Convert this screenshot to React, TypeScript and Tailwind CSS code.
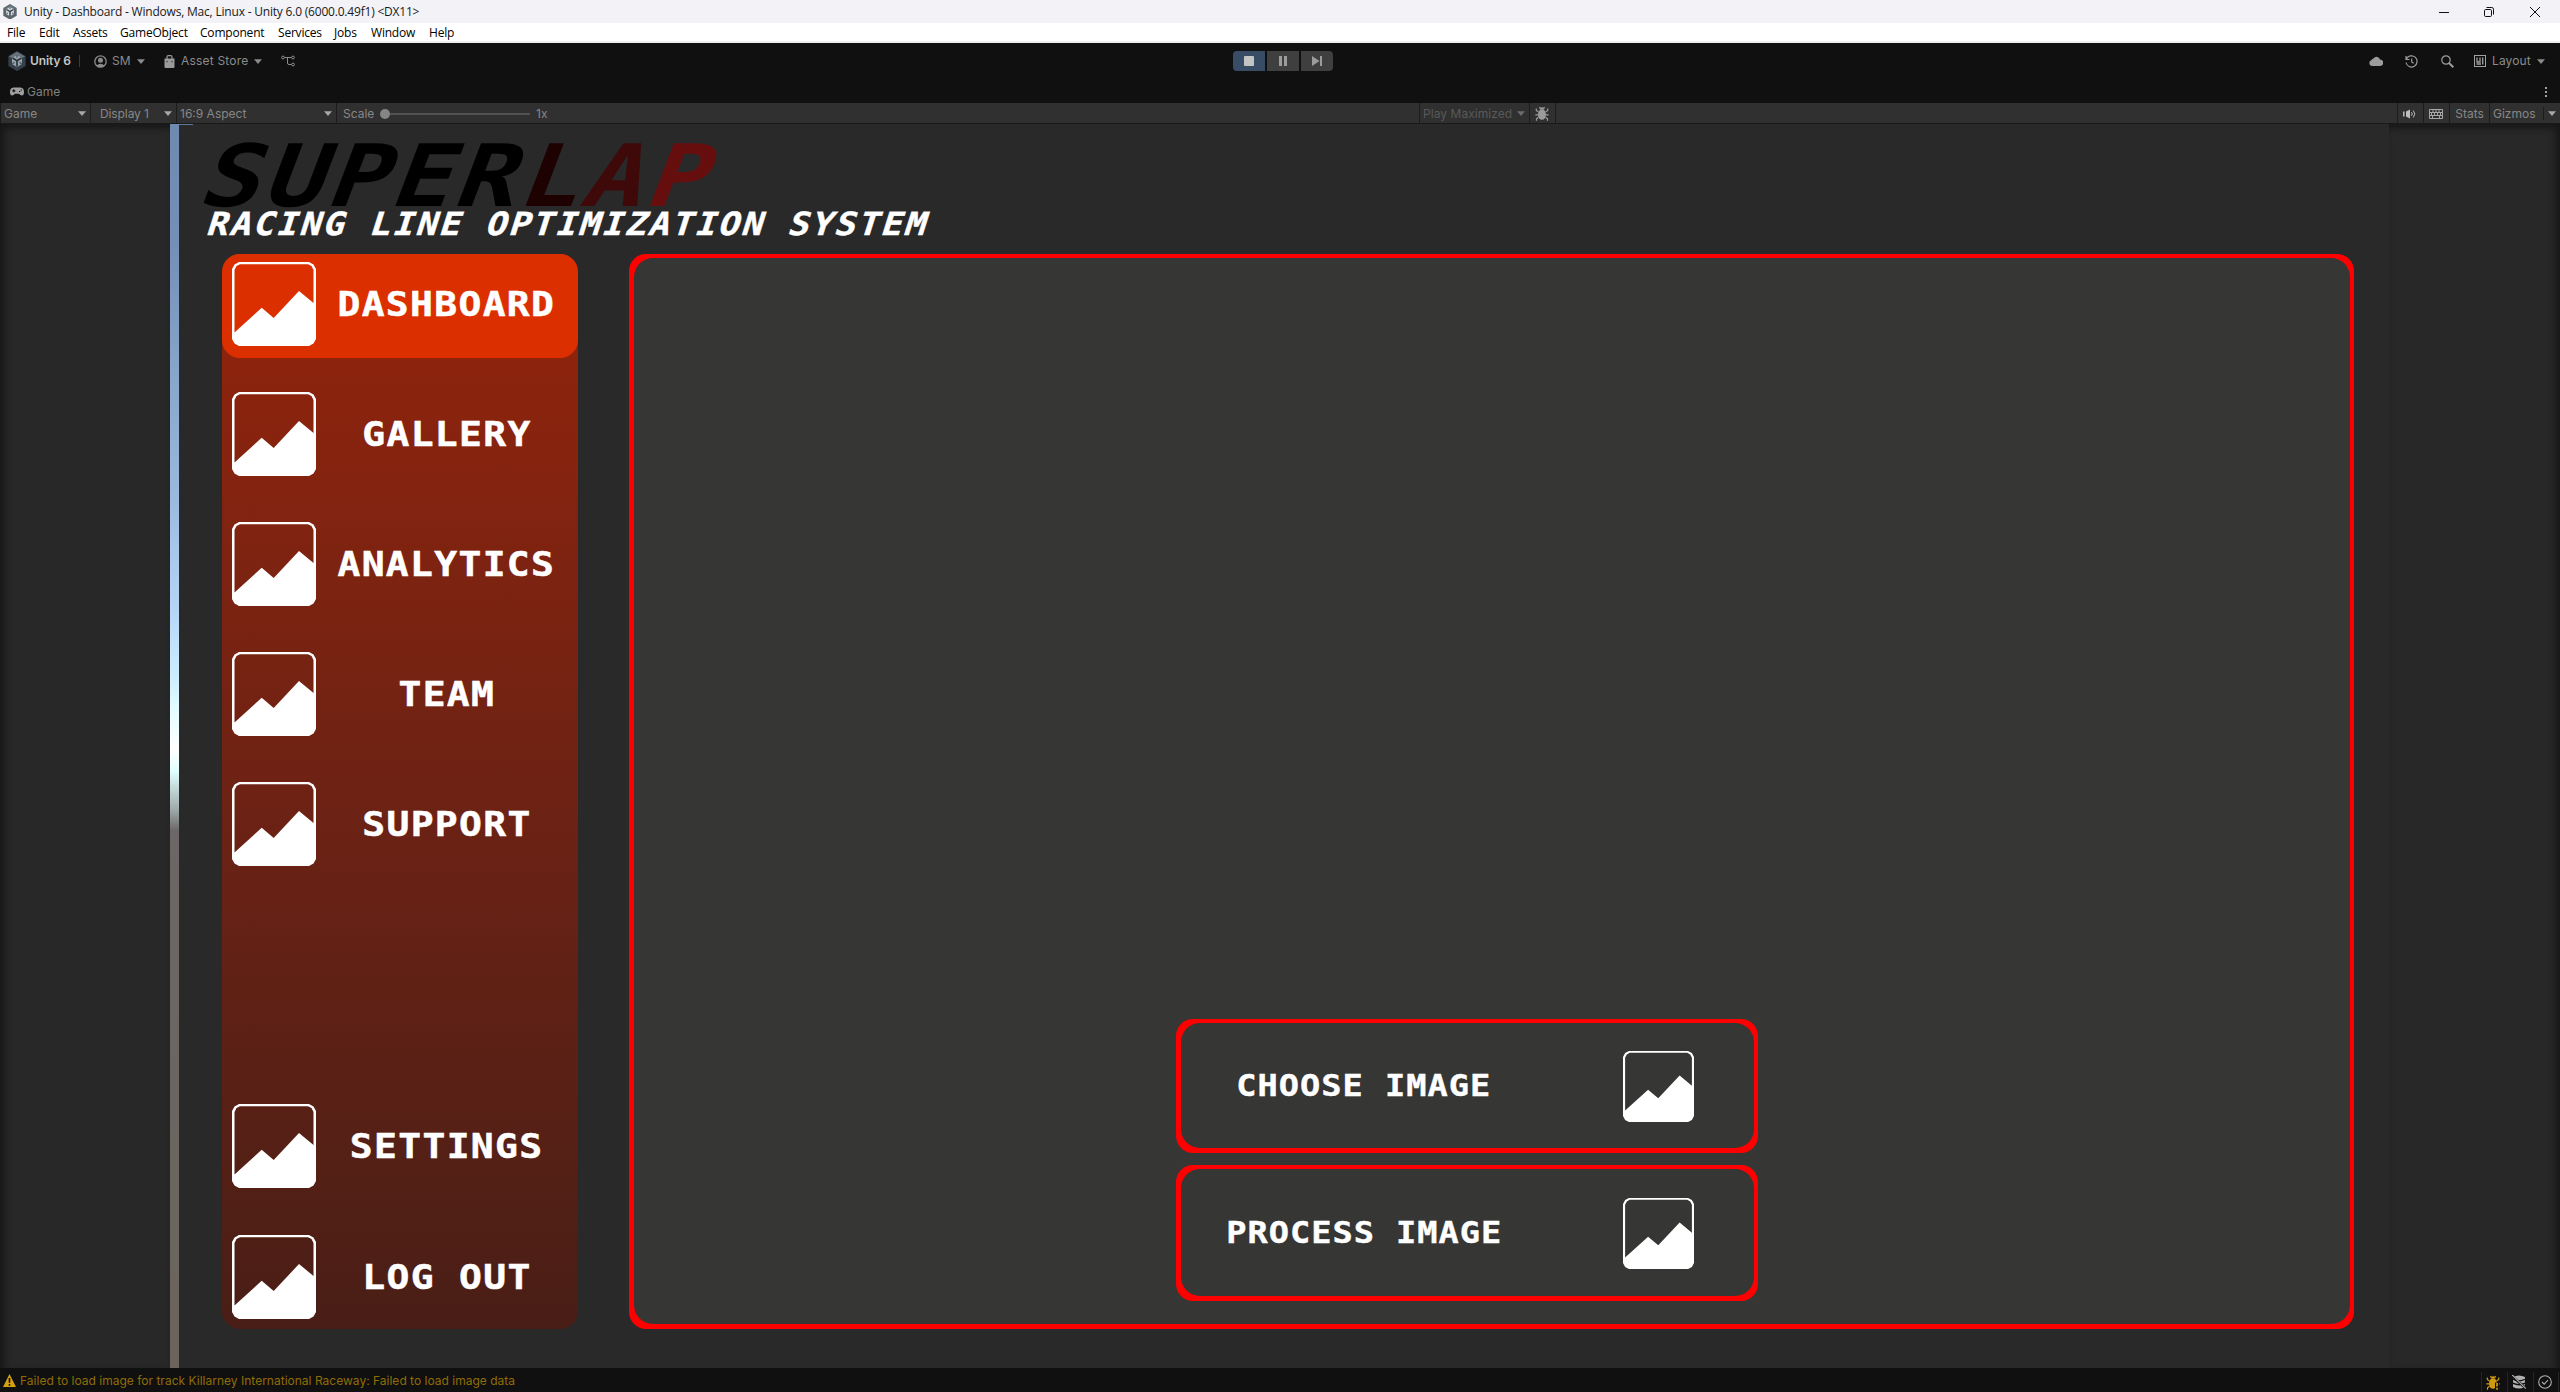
import React from "react";

const ui = "font-['Inter',sans-serif] whitespace-nowrap";
const mono = "font-['DejaVu_Sans_Mono',monospace] font-bold whitespace-pre";

function Caret({ className = "" }: { className?: string }) {
  return (
    <svg className={"shrink-0 " + className} width="8" height="5" viewBox="0 0 8 5">
      <path d="M0 .3h8L4 5z" fill="currentColor" />
    </svg>
  );
}

function UnityLogo({ size, dark }: { size: number; dark?: boolean }) {
  return (
    <svg className="shrink-0" width={size} height={size * 1.12} viewBox="0 0 18 20">
      <path d="M9 0l8.6 5v10L9 20 .4 15V5z" fill={dark ? "#59646d" : "#36404a"} />
      <path d="M9 .6l8 4.7-3 1.5L9 4 4 6.800 1 5.300z" fill="#66727c" />
      <path d="M9 3.800l5 2.900v6.100L9 15.800l-5-3V6.700z" fill={dark ? "#d5dade" : "#9aa4ac"} />
      <path d="M4.500 7L9 9.700 13.500 7M9 9.700v5.600" stroke="#2d353c" strokeWidth="1.700" fill="none" />
      <path d="M9 4v2.600M4.300 12.700l2.200-1.400M13.700 12.700l-2.200-1.400" stroke="#46515a" strokeWidth="1.200" />
    </svg>
  );
}

function Picture({ className }: { className: string }) {
  return (
    <svg className={"shrink-0 " + className} viewBox="0 0 84 84" preserveAspectRatio="none">
      <path
        fillRule="evenodd"
        fill="#fff"
        d="M7 0H77L81.500 2.500 84 7V77L81.500 81.500 77 84H7L2.500 81.500 0 77V7L2.500 2.500ZM8 2.200 4.500 4 2.500 8V70.500L29.700 45.700 41.700 56 67 29 81.500 41V8L79.500 4 76 2.200Z"
      />
    </svg>
  );
}

function Bug({ color, alert }: { color: string; alert?: boolean }) {
  return (
    <svg width="14" height="15" viewBox="0 0 14 15" fill="none" stroke={color} strokeWidth="1.200">
      <ellipse cx="7" cy="8.500" rx="4" ry="5.300" fill={color} stroke="none" />
      <path d="M4.800 3.500a2.200 2.200 0 014.400 0z" fill={color} stroke="none" />
      <path d="M4.500 1l1 2M9.500 1l-1 2M3.500 6L1.300 4.500V2.500M10.500 6l2.200-1.500V2.500M3 8.800H.3M11 8.800h2.700M3.500 11.300L1.500 12.800V14.800M10.500 11.300l2 1.500V14.800" />
      {alert && <path d="M11 7.500v8" stroke="#101010" strokeWidth="4" />}
      {alert && <path d="M11 8v3.500M11 12.800v1.900" stroke={color} strokeWidth="1.700" />}
    </svg>
  );
}

function TitleBar() {
  return (
    <div className="flex h-[23px] items-center bg-[#f2f2f7]">
      <div className="flex w-6 pl-[3px]">
        <UnityLogo size={14} dark />
      </div>
      <span className="grow font-['Open_Sans',sans-serif] text-[12px] leading-[23px] tracking-[-0.200px] whitespace-nowrap text-[#1a1a1a]">
        Unity - Dashboard - Windows, Mac, Linux - Unity 6.0 (6000.0.49f1) &lt;DX11&gt;
      </span>
      <svg className="mr-[35px]" width="10" height="10" viewBox="0 0 10 10">
        <path d="M0 5.500h10" stroke="#111" />
      </svg>
      <svg className="mr-9" width="10" height="10" viewBox="0 0 10 10" fill="none" stroke="#111">
        <rect x=".5" y="2.500" width="7" height="7" rx="1.200" />
        <path d="M2.500.5H7.800Q9.500.5 9.500 2.200V7.500" />
      </svg>
      <svg className="mr-5" width="10" height="10" viewBox="0 0 10 10">
        <path d="M0 0l10 10M10 0L0 10" stroke="#111" />
      </svg>
    </div>
  );
}

function MenuBar() {
  const menus: [string, string][] = [
    ["File", "w-8"],
    ["Edit", "w-[34px]"],
    ["Assets", "w-[47px]"],
    ["GameObject", "w-20"],
    ["Component", "w-[78px]"],
    ["Services", "w-14"],
    ["Jobs", "w-[37px]"],
    ["Window", "w-[58px]"],
    ["Help", "w-10"],
  ];
  return (
    <div className="flex h-5 items-center border-b-2 border-[#eef1ee] bg-white pt-[2px] pl-[7px] font-['Open_Sans',sans-serif] text-[12px] leading-[18px] tracking-[-0.200px] text-black">
      {menus.map(([m, w]) => (
        <span key={m} className={"whitespace-nowrap " + w}>
          {m}
        </span>
      ))}
    </div>
  );
}

function MainToolbar() {
  return (
    <div className={"flex h-[37px] items-center bg-[#101010] pb-px text-[12px] text-[#8b8b8b] " + ui}>
      <div className="flex w-[1233px] items-center pl-2">
        <UnityLogo size={18} />
        <span className="ml-1 w-[49px] tracking-[-0.100px] font-semibold text-[#c4c4c4]">Unity 6</span>
        <span className="h-3 w-px bg-[#3a3a3a]" />
        <svg className="ml-[14px]" width="13" height="13" viewBox="0 0 13 13">
          <circle cx="6.500" cy="6.500" r="5.700" fill="none" stroke="currentColor" strokeWidth="1.300" />
          <circle cx="6.500" cy="5.200" r="2.500" fill="currentColor" />
          <path d="M2.500 10.500Q6.500 6.800 10.500 10.500 6.500 14 2.500 10.500" fill="currentColor" />
        </svg>
        <span className="ml-[5px] w-[25px]">SM</span>
        <Caret />
        <svg className="ml-[19px]" width="11" height="13" viewBox="0 0 11 13">
          <path d="M.5 3.500h10V12q0 1-1 1h-8q-1 0-1-1z" fill="#9a9a9a" />
          <path d="M3 4.500V2Q3 .6 4.200.6h2.600Q8 .6 8 2v2.500" fill="none" stroke="#9a9a9a" strokeWidth="1.200" />
          <path d="M3 6v1.200M8 6v1.200" stroke="#222" />
        </svg>
        <span className="ml-[6px] w-[73px] tracking-[0.200px]">Asset Store</span>
        <Caret />
        <svg className="ml-[19px]" width="14" height="12" viewBox="0 0 14 12" fill="none" stroke="currentColor">
          <circle cx="2" cy="2.500" r="1.400" />
          <circle cx="12" cy="2.500" r="1.400" />
          <circle cx="12" cy="9.500" r="1.400" />
          <path d="M3.500 2.500h7M6.500 2.500v5.500q0 1.500 1.500 1.500h2.500" />
        </svg>
      </div>
      <div className="flex w-[1136px] gap-[2px]">
        <span className="flex h-5 w-8 items-center justify-center rounded-l bg-[#384c66]">
          <span className="size-[10px] rounded-[1px] bg-[#c4c4c4]" />
        </span>
        <span className="flex h-5 w-8 items-center justify-center gap-[2px] bg-[#3f3f3f]">
          <span className="h-[10px] w-[3px] bg-[#9c9c9c]" />
          <span className="h-[10px] w-[3px] bg-[#9c9c9c]" />
        </span>
        <span className="flex h-5 w-8 items-center justify-center rounded-r bg-[#3f3f3f]">
          <svg width="10" height="10" viewBox="0 0 10 10" fill="#9c9c9c">
            <path d="M0 0l7.500 5L0 10zM8 0h2v10H8z" />
          </svg>
        </span>
      </div>
      <svg width="14" height="10" viewBox="0 0 14 10" fill="#9c9c9c">
        <path d="M3 10a3 3 0 01-.4-5.900A2 2 0 014.500 2.500 3.600 3.600 0 0111 3.500 3.200 3.200 0 0111 10z" />
      </svg>
      <svg className="ml-[22px]" width="13" height="13" viewBox="0 0 13 13" fill="none" stroke="#9c9c9c" strokeWidth="1.200">
        <path d="M1.300 4.300A5.600 5.600 0 111 7.500M1 1v3.500h3.500M6.700 3.500V7l2 1.200" />
      </svg>
      <svg className="ml-[23px]" width="13" height="13" viewBox="0 0 13 13" fill="none" stroke="#9c9c9c">
        <circle cx="5" cy="5" r="4.200" strokeWidth="1.200" />
        <path d="M8 8l4.300 4.300" strokeWidth="2" />
      </svg>
      <svg className="ml-5" width="12" height="12" viewBox="0 0 12 12" fill="none" stroke="#a0a0a0">
        <rect x=".5" y=".5" width="11" height="11" />
        <path d="M3 2.500v4.500H6V2.500M8.700 2.500v7M2.500 9h4.500" strokeWidth="1.300" />
      </svg>
      <span className="ml-[6px] w-[45px] tracking-[0.100px]">Layout</span>
      <Caret />
    </div>
  );
}

function TabBar() {
  return (
    <div className={"flex h-[23px] items-center bg-[#101010] pl-[10px] text-[12px] text-[#8b8b8b] " + ui}>
      <svg width="14" height="9" viewBox="0 0 14 9">
        <path d="M3.500 .5h7Q14 .8 14 5 14 8.500 11.800 8.500 10.500 8.500 9 6.800H5Q3.500 8.500 2.200 8.500 0 8.500 0 5 0 .8 3.500 .5" fill="#a0a0a0" />
        <path d="M2.300 3.800h3M3.800 2.300v3M9 4.500h1.300M10.700 3h1.300" stroke="#101010" strokeWidth="1.200" />
      </svg>
      <span className="ml-[3px] grow text-[#828282]">Game</span>
      <span className="mr-[13px] flex flex-col gap-[2px]">
        <i className="size-[2px] bg-[#a0a0a0]" />
        <i className="size-[2px] bg-[#a0a0a0]" />
        <i className="size-[2px] bg-[#a0a0a0]" />
      </span>
    </div>
  );
}

function GameToolbar() {
  const cell = "flex h-full items-center border-r border-[#1c1c1c] pt-px ";
  return (
    <div className={"flex h-[21px] items-center border-b border-[#191919] border-l bg-[#303030] text-[12px] text-[#878787] " + ui}>
      <div className={cell + "w-[90px] justify-between pr-1 pl-[3px]"}>
        Game <Caret className="text-[#a8a8a8]" />
      </div>
      <div className={cell + "w-[86px] justify-between pr-1 pl-[9px] tracking-[-0.100px]"}>
        Display 1 <Caret className="text-[#a8a8a8]" />
      </div>
      <div className={cell + "w-[160px] justify-between pr-1 pl-[3px]"}>
        16:9 Aspect <Caret className="text-[#a8a8a8]" />
      </div>
      <div className={cell + "w-[1083px] pl-[6px]"}>
        <span className="w-[37px]">Scale</span>
        <span className="size-[10px] rounded-full bg-[#858585]" />
        <span className="mr-[6px] h-[2px] w-[140px] bg-[#525252]" />
        <span>1x</span>
      </div>
      <div className={cell + "w-[110px] justify-between pr-1 pl-[3px] tracking-[0.050px] text-[#595959]"}>
        Play Maximized <Caret className="text-[#6b6b6b]" />
      </div>
      <div className={cell + "w-[26px] justify-center pr-[2px]"}>
        <Bug color="#9c9c9c" />
      </div>
      <div className={cell + "grow"} />
      <div className={cell + "w-[26px] justify-center pr-[2px]"}>
        <svg width="13" height="10" viewBox="0 0 13 10" fill="none" stroke="#bbb">
          <path d="M3 2.500L7 .5v9L3 7.500z" fill="#bbb" stroke="none" />
          <path d="M.8 2.500v5" strokeWidth="1.500" />
          <path d="M8.500 3.200q1.500 1.800 0 3.600M10.300 1.500q3 3.500 0 7" />
        </svg>
      </div>
      <div className={cell + "w-[26px] justify-center pr-[2px]"}>
        <svg width="14" height="10" viewBox="0 0 14 10" fill="none" stroke="#a8a8a8">
          <path d="M.5.5h13v9H.5zM.5 3.500h13M.5 6.500h13M4 .5v3M7 .5v3M10 .5v3M2.500 3.500v3M5.500 3.500v3M8.500 3.500v3M11.500 3.500v3M3.500 6.500v3M10.500 6.500v3" />
        </svg>
      </div>
      <div className={cell + "w-10 justify-center"}>Stats</div>
      <div className="flex h-full w-[53px] items-center pt-px pl-[3px]">Gizmos</div>
      <div className="flex h-[13px] w-[17px] items-center border-l border-[#1c1c1c] pl-[4px]">
        <Caret className="text-[#a8a8a8]" />
      </div>
    </div>
  );
}

function NavItem({ label, active, className = "" }: { label: string; active?: boolean; className?: string }) {
  return (
    <div className={"flex h-[104px] shrink-0 pt-2 pl-[10px] " + (active ? "rounded-[18px] bg-[#db2f00] " : "") + className}>
      <Picture className="size-[84px]" />
      <span className="flex h-[84px] w-[261px] items-center justify-center pt-[2px]">
        <span className={"scale-x-[1.130] text-[33.600px] leading-none tracking-[1.200px] text-white [-webkit-text-stroke:0.500px_white] " + mono}>
          {label}
        </span>
      </span>
    </div>
  );
}

function Sidebar() {
  return (
    <div className="flex h-[1075px] w-[356px] flex-col rounded-[18px] bg-linear-to-b from-[#94230a] to-[#491e16]">
      <div className="flex flex-col gap-[26px]">
        <NavItem label="DASHBOARD" active />
        <NavItem label="GALLERY" />
        <NavItem label="ANALYTICS" />
        <NavItem label="TEAM" />
        <NavItem label="SUPPORT" />
      </div>
      <div className="mt-[218px] flex flex-col gap-[27px]">
        <NavItem label="SETTINGS" />
        <NavItem label="LOG OUT" />
      </div>
    </div>
  );
}

function RedFrame({ className, inner, children }: { className: string; inner: string; children: React.ReactNode }) {
  return (
    <div className={"flex rounded-[17px] bg-[#ff0000] pt-1 pr-1 pb-[5px] pl-[5px] " + className}>
      <div className={"flex grow rounded-[19px] bg-[#363634] " + inner}>{children}</div>
    </div>
  );
}

function ActionButton({ label, className }: { label: string; className: string }) {
  return (
    <RedFrame className={"w-[582px] " + className} inner="items-center pl-[43px]">
      <span className="flex w-[280px] justify-center">
        <span className={"scale-x-[1.120] text-[30px] leading-none tracking-[0.900px] text-white [-webkit-text-stroke:0.400px_white] " + mono}>
          {label}
        </span>
      </span>
      <Picture className="mt-[2px] ml-[119px] size-[71px]" />
    </RedFrame>
  );
}

function Brand() {
  return (
    <div className="flex h-[130px] flex-col items-start pt-[21px] pl-[16px]">
      <div className={"origin-bottom-left -skew-x-[18deg] scale-x-[1.170] text-[86px] leading-[63px] tracking-[2.700px] text-black " + mono}>
        SUPER<span className="text-[#1e0101]">L</span>
        <span className="text-[#3f0909]">A</span>
        <span className="text-[#660e0e]">P</span>
      </div>
      <div className={"mt-1 ml-[10px] origin-bottom-left -skew-x-[16deg] scale-x-[1.100] text-[32px] leading-[24px] tracking-[1.870px] text-white [-webkit-text-stroke:0.400px_white] " + mono}>
        RACING LINE OPTIMIZATION SYSTEM
      </div>
    </div>
  );
}

function GameView() {
  return (
    <div className="flex h-[1244px] bg-[#282828]">
      <div className="w-[170px] shadow-[inset_4px_4px_7px_#161616]" />
      <div className="w-[9px] bg-[linear-gradient(#6f8ab1_0%,#7490b8_10%,#9bb9df_30%,#b5d5f7_39%,#cdeeff_44.500%,#e3fcff_47%,#ffffff_50.300%,#e3ffff_52%,#9ba8a7_55.200%,#6c6766_56.800%,#6a645c_100%)]" />
      <div className="w-[2210px] bg-[#292929]">
        <div className="h-px w-[14px] bg-[#5f7aa0]" />
        <div className="-mt-px">
          <Brand />
        </div>
        <div className="flex gap-[51px] pl-[43px]">
          <Sidebar />
          <RedFrame className="h-[1075px] w-[1725px]" inner="flex-col items-start gap-3 pt-[761px] pl-[542px]">
            <ActionButton label="CHOOSE IMAGE" className="h-[134px]" />
            <ActionButton label="PROCESS IMAGE" className="h-[136px]" />
          </RedFrame>
        </div>
      </div>
      <div className="grow shadow-[inset_-4px_4px_7px_#161616]" />
    </div>
  );
}

function StatusBar() {
  const cell = "flex h-5 w-[26px] items-center justify-center border-l border-[#252525] pr-[3px]";
  return (
    <div className="flex h-6 items-center bg-[#101010] pt-px pl-[3px]">
      <svg width="13" height="13" viewBox="0 0 13 13">
        <path d="M6.500 0L13 13H0z" fill="#d3a111" />
        <path d="M6.500 4v4.800M6.500 10v1.800" stroke="#101010" strokeWidth="1.600" />
      </svg>
      <span className={"ml-1 grow text-[12px] tracking-[0.010px] text-[#8f6d04] " + ui}>
        Failed to load image for track Killarney International Raceway: Failed to load image data
      </span>
      <div className="flex pt-[3px] pr-px">
        <span className={cell}>
          <Bug color="#cf9a10" alert />
        </span>
        <span className={cell}>
          <svg width="14" height="14" viewBox="0 0 14 14" fill="#b0b0b0">
            <path d="M1 2q6-3 12 0v1.800q-6 2.800-12 0zM1 5q6 2.800 12 0v2.500q-6 2.800-12 0zM1 9q6 2.800 12 0v3q-6 3-12 0z" />
            <path d="M0 1l14 12.500" stroke="#101010" strokeWidth="2.500" />
            <path d="M.3 0l13.500 13.500" stroke="#b0b0b0" strokeWidth="1.100" />
          </svg>
        </span>
        <span className={cell + " border-r"}>
          <svg width="14" height="14" viewBox="0 0 14 14" fill="none" stroke="#b0b0b0" strokeWidth="1.100">
            <circle cx="7" cy="7" r="6.300" />
            <path d="M4 7l2.200 2.200L10 5" />
          </svg>
        </span>
      </div>
    </div>
  );
}

export default function App() {
  return (
    <div className="flex h-[1392px] w-[2560px] flex-col overflow-hidden bg-[#101010]">
      <TitleBar />
      <MenuBar />
      <MainToolbar />
      <TabBar />
      <GameToolbar />
      <GameView />
      <StatusBar />
    </div>
  );
}
